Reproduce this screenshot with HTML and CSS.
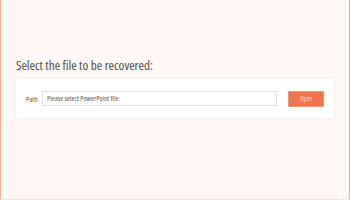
FILE: index.html
```html
<!DOCTYPE html>
<html>
<head>
<meta charset="utf-8">
<link rel="stylesheet" href="styles.css">
</head>
<body>
<div class="frame">
  <h1 class="title">Select the file to be recovered:</h1>
  <div class="card">
    <span class="label">Path</span>
    <div class="input">Please select PowerPoint file</div>
    <button class="btn">Open</button>
  </div>
</div>
</body>
</html>
```
FILE: styles.css
```css
html, body { margin: 0; padding: 0; }
body { width: 350px; height: 200px; background: #fff8f5; font-family: "Open Sans", "Noto Sans", sans-serif; font-stretch: 87.5%; }
.frame {
  box-sizing: border-box;
  width: 350px;
  height: 200px;
  border-left: 1px solid #f5ac96;
  border-right: 1px solid #f5ac96;
  border-bottom: 1px solid #f1e6e2;
  padding: 57px 15px 0 15px;
}
.title {
  margin: 0;
  font-size: 13.2px;
  font-weight: 400;
  line-height: 17px;
  color: #4d4d4d;
  height: 22px;
}
.card {
  box-sizing: border-box;
  width: 318px;
  height: 39px;
  background: #ffffff;
  box-shadow: 0 0 2px rgba(200, 170, 160, 0.35);
  display: flex;
  align-items: center;
  padding: 0 10px;
}
.label {
  font-size: 7.5px;
  color: #5a5a5a;
  width: 16px;
}
.input {
  box-sizing: border-box;
  width: 235px;
  height: 15px;
  border: 1px solid #e2e2e2;
  font-size: 7.3px;
  line-height: 13px;
  padding-left: 4px;
  color: #5a5a5a;
}
.btn {
  box-sizing: border-box;
  margin-left: 11px;
  width: 36px;
  height: 16px;
  background: #ee7550;
  border: 1px solid #f2957a;
  color: #fbd9cc;
  font-family: "Open Sans", "Noto Sans", sans-serif;
  font-stretch: 87.5%;
  font-size: 6.5px;
  padding: 0;
}
```
